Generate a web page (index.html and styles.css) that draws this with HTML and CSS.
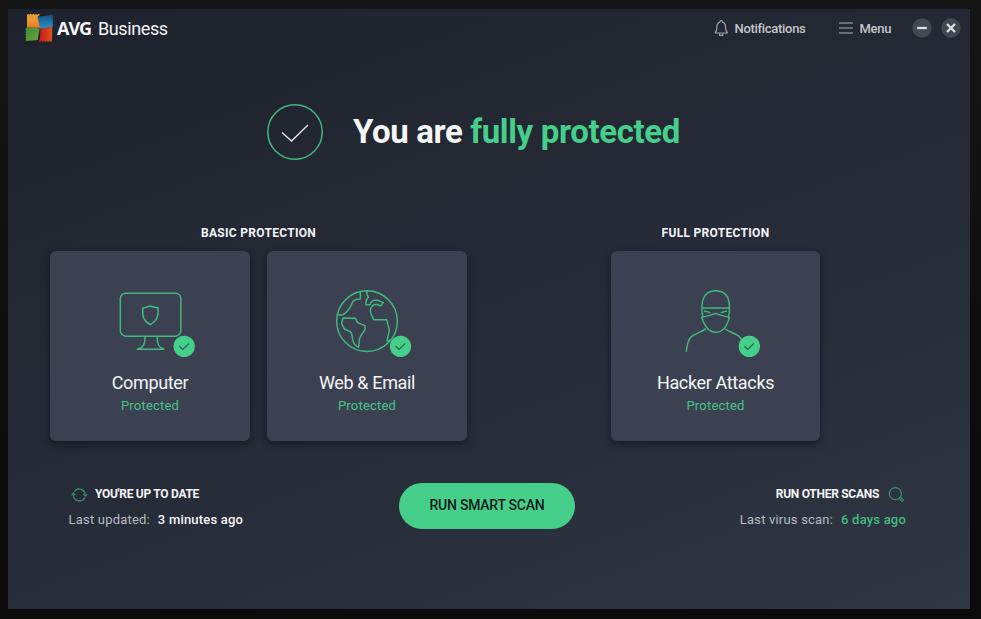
FILE: index.html
```html
<!DOCTYPE html>
<html lang="en">
<head>
<meta charset="utf-8">
<title>AVG Business</title>
<link rel="stylesheet" href="styles.css">
</head>
<body>
<main class="window">
  <header class="topbar">
    <div class="brand">
      <svg class="brand-mark" viewBox="76 40 90 90">
        <defs>
          <linearGradient id="o" x1="0" y1="0" x2="0" y2="1"><stop offset="0" stop-color="#e0a02c"/><stop offset="0.500" stop-color="#f09435"/><stop offset="1" stop-color="#ee7328"/></linearGradient>
          <linearGradient id="b" x1="0" y1="0" x2="0" y2="1"><stop offset="0" stop-color="#155480"/><stop offset="1" stop-color="#2f94cc"/></linearGradient>
          <linearGradient id="g" x1="0" y1="0" x2="1" y2="1"><stop offset="0" stop-color="#3f8a35"/><stop offset="1" stop-color="#64a83a"/></linearGradient>
          <linearGradient id="r" x1="0" y1="0" x2="1" y2="0"><stop offset="0" stop-color="#c8141c"/><stop offset="1" stop-color="#d9551c"/></linearGradient>
        </defs>
        <path fill="url(#o)" d="M82 45l4-3 3 3 4-3 4 3 4-3 4 3 4-3 4 3 4-3 4 3-6 5 7 34-40 0z"/>
        <path fill="url(#b)" d="M113 51l44-5 4 4-3 4 3 4-3 4 3 4-3 4 3 4-3 4 2 3-38 7z"/>
        <path fill="url(#g)" d="M82 83l38 3-6 35-34 3-3-3 3-4-3-4 3-4-3-4 3-4-3-4 3-4-3-4z"/>
        <path fill="url(#r)" d="M122 87l36-6-1 43-4 3-4-3-4 3-4-3-4 3-4-3-4 3-4-3-5 3-3-5 4-3z"/>
      </svg>
      <span class="brand-avg">AVG</span><span class="brand-dot"></span>
      <span class="brand-name">Business</span>
    </div>
    <nav class="actions">
      <a class="action notifications">
        <svg class="bell" viewBox="43 60 44 54"><path d="M46 102c5-5 5-9 5-17 0-8 4-14 9-15.500 0-6 8-6 8 0 5 1.500 9 7.500 9 15.500 0 8 0 12 6 17z M59 104v5h10v-5"/></svg>
        <span class="notif-label">Notifications</span>
      </a>
      <a class="action menu">
        <svg class="burger" viewBox="0 0 14 12"><path d="M0 1h14M0 6h14M0 11h14"/></svg>
        <span class="menu-label">Menu</span>
      </a>
      <div class="controls">
        <svg class="control" viewBox="0 0 20 20"><circle cx="10" cy="10" r="9.700"/><path d="M5.200 10h9.600"/></svg>
        <svg class="control" viewBox="0 0 20 20"><circle cx="10" cy="10" r="9.700"/><path d="M6 6l8 8M14 6l-8 8"/></svg>
      </div>
    </nav>
  </header>

  <section class="hero">
    <svg class="hero-check" viewBox="0 0 56 56"><circle cx="28" cy="28" r="27.200"/><path d="M15 28.500l9.500 8.500L41 21"/></svg>
    <h1 class="hero-title">You are <span class="ok">fully protected</span></h1>
  </section>

  <section class="protection">
    <div class="group basic">
      <h2 class="group-title">BASIC PROTECTION</h2>
      <div class="cards">
        <article class="card">
          <svg class="card-icon" viewBox="180 195 300 225">
            <g class="lines">
              <rect x="241" y="219.500" width="181.500" height="129" rx="16"/>
              <path d="M331 258q12 5 23 5c3 24-4 42-23 51-19-9-26-27-22-51q10 0 22-5z"/>
              <path d="M315 350c1 19-3 34-23 37.500h80c-18-5-22-18-20-37.500"/>
            </g>
            <circle class="badge" cx="432.500" cy="379" r="32"/><path class="tick" d="M418 378l10 10 19-18"/>
          </svg>
          <h3 class="card-title">Computer</h3>
          <p class="card-status">Protected</p>
        </article>
        <article class="card">
          <svg class="card-icon" viewBox="172 195 300 225">
            <g class="lines">
              <circle cx="322" cy="303.500" r="91"/>
              <path d="M234 285h12c14-5 19-14 25-23 6-8 6-17 12-21 7-4 19-4 19-4v-23"/>
              <path d="M322 213v10l4 9c-6 5-8 13-7 22h12c3-8 6-12 13-13h10l17 7-8 10-11-5c-8 0-13 2-16 8-6 5-4 14-2 20l8 18h39l8 30-7 34 13-3"/>
              <path d="M250 294l37 1 7 13 22 9v12c-6 10-13 16-17 29l-2 24c-17-7-16-17-19-27 0-12-5-20-9-21l-15-7-8-16z"/>
            </g>
            <circle class="badge" cx="422.500" cy="379" r="32"/><path class="tick" d="M408 378l10 10 19-18"/>
          </svg>
          <h3 class="card-title">Web &amp; Email</h3>
          <p class="card-status">Protected</p>
        </article>
      </div>
    </div>
    <div class="group full">
      <h2 class="group-title">FULL PROTECTION</h2>
      <div class="cards">
        <article class="card">
          <svg class="card-icon" viewBox="198 195 300 225">
            <g class="lines">
              <path d="M309 292c-5-22-5-42 3-60 6-14 16-20 35-20s29 6 36 20c7 18 7 38 2 60"/>
              <path d="M305 264h83M312 273l19 5M381 273l-19 5"/>
              <path d="M305 292q22-4 42-12 20 8 41 12c-7 28-20 45-41 45s-33-17-42-45z"/>
              <path d="M259 396c1-18 6-37 16-47 14-10 30-13 43-23M375 327c13 8 28 13 41 21l12 14"/>
            </g>
            <circle class="badge" cx="448" cy="379" r="32"/><path class="tick" d="M433 378l10 10 19-18"/>
          </svg>
          <h3 class="card-title">Hacker Attacks</h3>
          <p class="card-status">Protected</p>
        </article>
      </div>
    </div>
  </section>

  <footer class="bottom">
    <div class="update">
      <div class="line heading">
        <svg class="refresh" viewBox="63 36 50 44"><path d="M72 50a18 18 0 0 1 33 8M99 57l6 6 6-6M104 67a18 18 0 0 1-34-9M65 60l5-6 6 6"/></svg>
        <span class="up-title">YOU'RE UP TO DATE</span>
      </div>
      <div class="line detail"><span class="muted">Last updated:</span><span>3 minutes ago</span></div>
    </div>
    <button class="scan">RUN SMART SCAN</button>
    <div class="other">
      <div class="line heading">
        <span class="other-title">RUN OTHER SCANS</span>
        <svg class="search" viewBox="504 33 48 48"><circle cx="526" cy="56" r="18"/><path d="M538 70l4-4 8 8q0 5-5 4z"/></svg>
      </div>
      <div class="line detail"><span class="muted">Last virus scan:</span><span class="ok-dim">6 days ago</span></div>
    </div>
  </footer>
</main>
</body>
</html>
```
FILE: styles.css
```css
* { box-sizing: border-box; }
body {
  margin: 0;
  width: 981px;
  height: 619px;
  padding: 9px 11px 10px 8px;
  overflow: hidden;
  background: linear-gradient(180deg, #161616, #0d0d0d 60%, #0b0b0b);
  font-family: Roboto, "Liberation Sans", sans-serif;
  color: #f4f5f7;
}
h1, h2, h3, p { margin: 0; }
svg { display: block; flex: none; }
span { white-space: nowrap; }
.window {
  display: flex;
  flex-direction: column;
  width: 962px;
  height: 600px;
  background: linear-gradient(160deg, #1e222d 0%, #222732 28%, #282d3a 65%, #303643 100%);
}
.ok { color: #46cf8b; }
.ok-dim { color: #43bd80; }

.topbar { display: flex; justify-content: space-between; height: 38px; padding: 0 9.5px 0 17px; }
.brand { display: flex; align-items: center; }
.brand-mark { width: 30px; height: 30px; margin-top: -1px; }
.brand-avg { width: 35px; margin-left: 2px; font: 700 18px/38px "Open Sans", sans-serif; letter-spacing: -1px; }
.brand-dot { width: 1px; height: 1px; margin: 12px 0 0 0; background: #9a9da5; }
.brand-name { margin-left: 5px; padding-top: 1px; font-size: 18px; letter-spacing: -0.4px; }
.actions { display: flex; align-items: center; font-size: 13px; font-weight: 500; color: #c3c5ca; }
.action { display: flex; align-items: center; }
.notif-label { width: 71px; letter-spacing: -0.3px; }
.menu-label { width: 32px; letter-spacing: -0.3px; }
.bell { width: 15px; height: 18px; margin-right: 6px; fill: none; stroke: #a1a4ab; stroke-width: 3.500; stroke-linejoin: round; }
.burger { width: 14px; height: 12px; margin-right: 7px; stroke: #7d818a; stroke-width: 1.300; }
.menu { margin-left: 33px; }
.controls { display: flex; gap: 9px; margin-left: 20px; }
.control { width: 20px; height: 20px; }
.control circle { fill: #444852; }
.control path { stroke: #dedfe2; stroke-width: 2.300; }

.hero { display: flex; align-items: center; height: 56px; margin: 57px 0 0 259px; }
.hero-check { width: 56px; height: 56px; fill: none; stroke: #40b77c; stroke-width: 1.500; }
.hero-check path { stroke: #e1e3e7; stroke-width: 1.400; }
.hero-title { margin-left: 30px; font-size: 33px; line-height: 40px; font-weight: 700; letter-spacing: -0.36px; white-space: nowrap; }

.protection { display: flex; justify-content: space-between; margin: 65px 150px 0 42px; }
.group-title { height: 16px; margin-bottom: 9.5px; text-align: center; font-size: 12px; line-height: 16px; font-weight: 700; letter-spacing: 0.3px; }
.cards { display: flex; gap: 17px; }
.card {
  display: flex;
  flex-direction: column;
  align-items: center;
  width: 200px;
  height: 190px;
  padding-top: 34.5px;
  border-radius: 6px;
  background: #3c4152;
  box-shadow: 0 3px 7px rgba(10, 13, 20, 0.6);
}
.full .card { width: 209px; }
.card-icon { width: 100px; height: 75px; }
.lines { fill: none; stroke: #40bb7e; stroke-width: 4.300; stroke-linejoin: round; }
.badge { fill: #46cf8b; }
.tick { fill: none; stroke: #26624c; stroke-width: 3.500; }
.card-title { margin-top: 11px; font-size: 18px; line-height: 24px; font-weight: 400; letter-spacing: -0.35px; }
.card-status { font-size: 13px; line-height: 22px; color: #46c486; letter-spacing: 0.2px; }

.bottom { display: flex; align-items: flex-start; margin: 42.5px 64px 0 60.5px; }
.line { display: flex; align-items: center; height: 22px; }
.heading { margin-bottom: 3px; font-size: 12px; font-weight: 700; letter-spacing: -0.28px; }
.detail { gap: 8px; font-size: 13px; font-weight: 500; letter-spacing: 0.2px; }
.update { width: 175px; }
.refresh { width: 17px; height: 15px; margin: 0 7.5px 0 2px; fill: none; stroke: #36956a; stroke-width: 3.500; }
.muted { color: #b7bac2; font-weight: 400; }
.scan {
  width: 176px;
  height: 46px;
  margin: 0 auto 0 155.5px;
  padding: 0 0 2px;
  border: 0;
  border-radius: 23px;
  background: #46cf8b;
  color: #101c1a;
  font: 500 14px Roboto, sans-serif;
  letter-spacing: -0.25px;
}
.other { display: flex; flex-direction: column; align-items: flex-end; }
.search { width: 16px; height: 16px; margin: 0 2px 0 9px; fill: none; stroke: #36956a; stroke-width: 3.500; }
```
